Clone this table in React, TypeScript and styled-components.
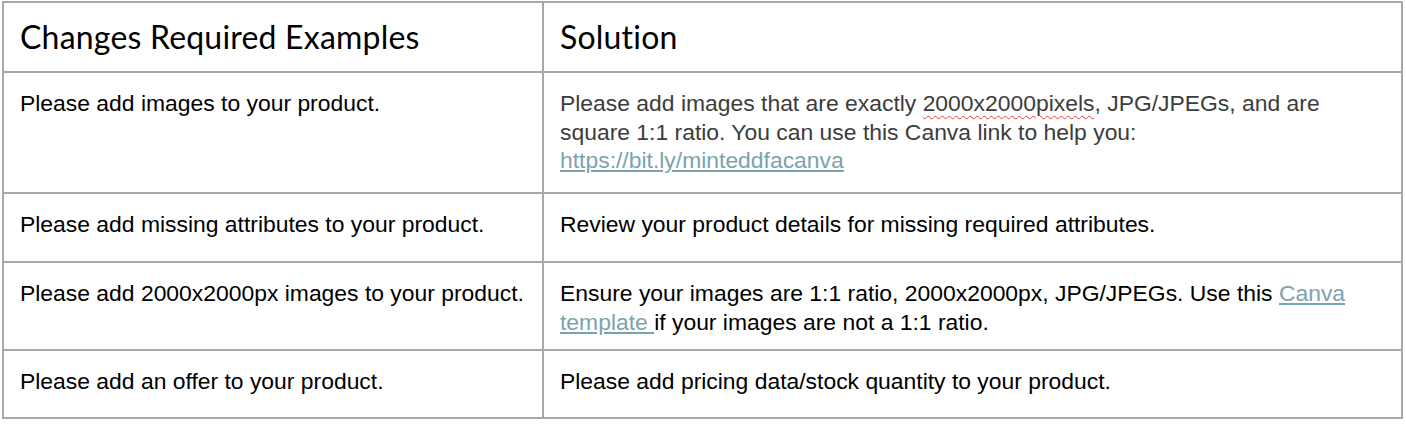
import styled, { createGlobalStyle } from "styled-components"

const GlobalStyle = createGlobalStyle`
    html, body {
        margin: 0;
        background: #ffffff;
    }
    body {
        padding: 1px 0 0 2px;
    }
`

const Table = styled.table`
    border-collapse: separate;
    border-spacing: 0;
    table-layout: fixed;
    width: 1399px;
    border-top: 2px solid #a8a8a8;
    border-left: 2px solid #a8a8a8;
`

const Row = styled.tr<{ $height: number }>`
    height: ${(p) => p.$height}px;
`

const HeadCell = styled.th`
    box-sizing: border-box;
    border-right: 2px solid #a8a8a8;
    border-bottom: 2px solid #a8a8a8;
    padding: 0 16px 2px;
    text-align: left;
    vertical-align: middle;
    font-family: "Lato", "Liberation Sans", sans-serif;
    font-weight: 400;
    font-size: 32px;
    letter-spacing: 0.2px;
    color: #000000;
`

const Cell = styled.td<{ $muted?: boolean }>`
    box-sizing: border-box;
    border-right: 2px solid #a8a8a8;
    border-bottom: 2px solid #a8a8a8;
    padding: 16px 10px 0 16px;
    vertical-align: top;
    font-family: "Liberation Sans", Arial, sans-serif;
    font-size: 22.9px;
    line-height: 28.5px;
    color: ${(p) => (p.$muted ? "#3c3c3c" : "#000000")};
`

const Link = styled.a`
    color: #7ba3ad;
    text-decoration: underline;
    text-underline-offset: 2px;
`

const Misspelt = styled.span`
    text-decoration: underline wavy #e0453a;
    text-decoration-thickness: 1px;
    text-underline-offset: 4px;
`

const rows = [
    {
        change: "Please add images to your product.",
        height: 121,
        muted: true,
        solution: (
            <>
                Please add images that are exactly <Misspelt>2000x2000pixels</Misspelt>, JPG/JPEGs, and are
                square 1:1 ratio. You can use this Canva link to help you:{" "}
                <Link href="#">https://bit.ly/minteddfacanva</Link>
            </>
        ),
    },
    {
        change: "Please add missing attributes to your product.",
        height: 69,
        solution: <>Review your product details for missing required attributes.</>,
    },
    {
        change: "Please add 2000x2000px images to your product.",
        height: 88,
        solution: (
            <>
                Ensure your images are 1:1 ratio, 2000x2000px, JPG/JPEGs. Use this{" "}
                <Link href="#">Canva template </Link>if your images are not a 1:1 ratio.
            </>
        ),
    },
    {
        change: "Please add an offer to your product.",
        height: 68,
        solution: <>Please add pricing data/stock quantity to your product.</>,
    },
]

export default function App() {
    return (
        <>
            <GlobalStyle />
            <Table>
                <colgroup>
                    <col width={540} />
                    <col width={859} />
                </colgroup>
                <thead>
                    <Row $height={70}>
                        <HeadCell>Changes Required Examples</HeadCell>
                        <HeadCell>Solution</HeadCell>
                    </Row>
                </thead>
                <tbody>
                    {rows.map((r) => (
                        <Row key={r.change} $height={r.height}>
                            <Cell>{r.change}</Cell>
                            <Cell $muted={r.muted}>{r.solution}</Cell>
                        </Row>
                    ))}
                </tbody>
            </Table>
        </>
    )
}
